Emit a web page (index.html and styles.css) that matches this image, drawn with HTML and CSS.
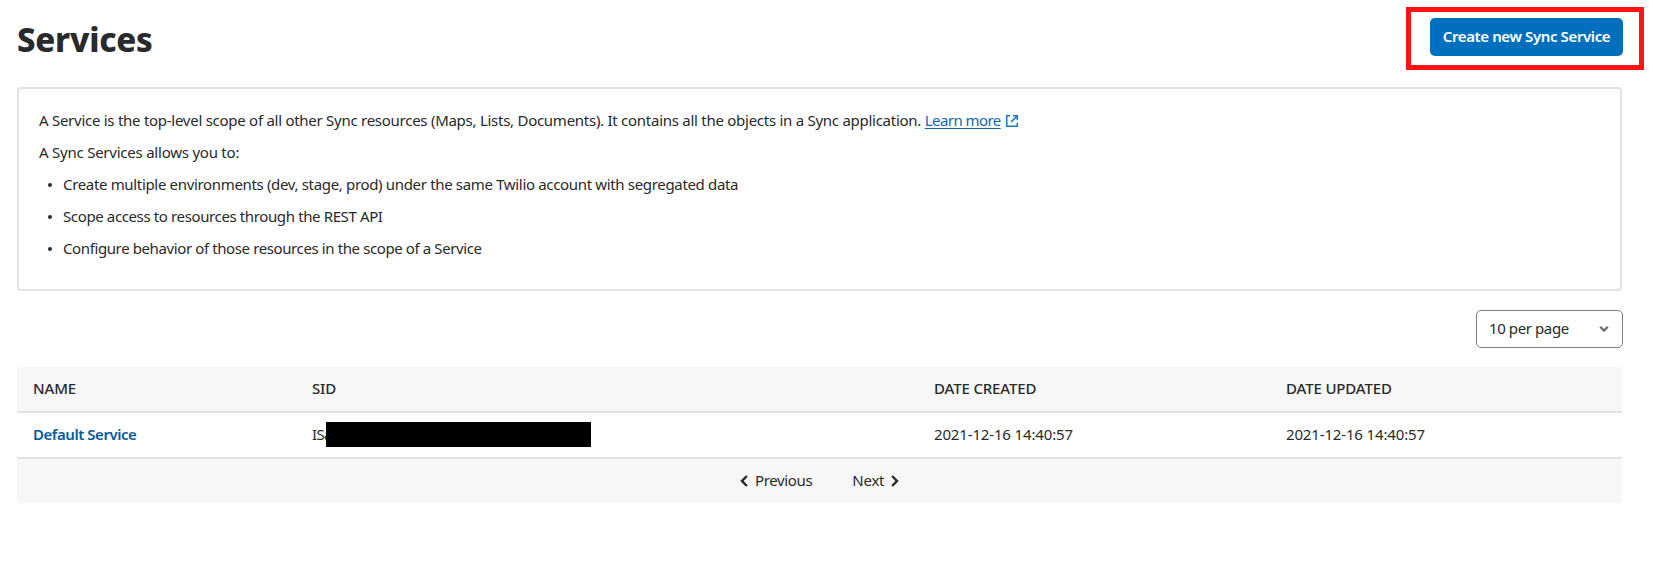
FILE: index.html
```
<!DOCTYPE html>
<html lang="en">
<head>
<meta charset="utf-8">
<title>Services</title>
<link rel="stylesheet" href="styles.css">
</head>
<body>
<main class="page">
  <header class="page-header">
    <h1 class="page-title">Services</h1>
    <div class="highlight">
      <button class="button-primary" type="button">Create new Sync Service</button>
    </div>
  </header>

  <section class="card">
    <p class="intro">A Service is the top-level scope of all other Sync resources (Maps, Lists, Documents). It contains all the objects in a Sync application.
      <a class="learn-more" href="#"><span class="learn-more-text">Learn more</span><svg class="icon-external" width="14" height="14" viewBox="0 0 14 14" fill="none" stroke="currentColor" stroke-width="1.6"><path d="M5 1.8H1.7v10.5h10.6V8.7M8 1.8h4.3V6M11.6 2.5L6.2 7.9"/></svg></a></p>
    <p class="allows">A Sync Services allows you to:</p>
    <ul class="features">
      <li class="feature feature-env">Create multiple environments (dev, stage, prod) under the same Twilio account with segregated data</li>
      <li class="feature feature-api">Scope access to resources through the REST API</li>
      <li class="feature feature-config">Configure behavior of those resources in the scope of a Service</li>
    </ul>
  </section>

  <div class="toolbar">
    <div class="select">
      <span>10 per page</span>
      <svg width="10" height="8" viewBox="0 0 10 8" fill="none" stroke="currentColor" stroke-width="2.2" stroke-linejoin="round"><path d="M1.2 1.8L5 5.6l3.8-3.8"/></svg>
    </div>
  </div>

  <table class="services">
    <colgroup><col class="col-name"><col class="col-sid"><col class="col-created"><col></colgroup>
    <thead>
      <tr><th>NAME</th><th>SID</th><th>DATE CREATED</th><th>DATE UPDATED</th></tr>
    </thead>
    <tbody>
      <tr>
        <td><a class="service-link" href="#">Default Service</a></td>
        <td><div class="sid">ISa<span class="redaction"></span></div></td>
        <td>2021-12-16 14:40:57</td>
        <td>2021-12-16 14:40:57</td>
      </tr>
    </tbody>
  </table>
  <nav class="pager">
    <span class="pager-item pager-previous"><svg width="8" height="12" viewBox="0 0 8 12" fill="none" stroke="currentColor" stroke-width="2.5"><path d="M6.9 1L2 6l4.9 5"/></svg>Previous</span>
    <span class="pager-item pager-next">Next<svg width="8" height="12" viewBox="0 0 8 12" fill="none" stroke="currentColor" stroke-width="2.5"><path d="M1.1 1L6 6l-4.9 5"/></svg></span>
  </nav>
</main>
</body>
</html>
```
FILE: styles.css
```
* { box-sizing: border-box; }

body {
  margin: 0;
  background: #fff;
  color: #282a2b;
  font: 400 15px/20px "Noto Sans", sans-serif;
}

p, h1, ul { margin: 0; padding: 0; }

.page { width: 1653px; padding: 7px 9px 0 17px; }

.page-header {
  display: flex;
  justify-content: space-between;
  align-items: flex-start;
}

.page-title {
  padding-top: 13px;
  font-size: 33px;
  line-height: 40px;
  font-weight: 800;
  letter-spacing: -0.25px;
}

.highlight {
  width: 238px;
  height: 63px;
  padding: 6px 16px 0 19px;
  border: 5px solid #fd1313;
}

.button-primary {
  display: block;
  width: 193px;
  height: 38px;
  padding: 0 0 2px;
  border: 0;
  border-radius: 5px;
  background: #0070be;
  color: #fff;
  font: 600 15px/20px "Noto Sans", sans-serif;
  letter-spacing: -0.38px;
  white-space: nowrap;
}

.card {
  width: 1605px;
  height: 204px;
  margin-top: 17px;
  padding: 21px 20px;
  border: 2px solid #dfe3e8;
  border-radius: 4px;
}

.intro { letter-spacing: -0.267px; }

.learn-more {
  color: #1467a9;
  letter-spacing: -0.56px;
  text-decoration: none;
}

.learn-more-text { text-decoration: underline; text-underline-offset: 2px; }

.icon-external { margin-left: 4px; vertical-align: -2px; color: #2579b8; }

.allows { margin-top: 12px; letter-spacing: -0.23px; }

.features { list-style: none; }

.feature {
  display: flex;
  align-items: center;
  gap: 11px;
  margin-top: 12px;
  padding-left: 9px;
}

.feature::before {
  content: "";
  width: 4px;
  height: 4px;
  margin-top: 2px;
  border-radius: 50%;
  background: #282a2b;
}

.feature-env { letter-spacing: -0.335px; }
.feature-api { letter-spacing: -0.375px; }
.feature-config { letter-spacing: -0.39px; }

.toolbar {
  display: flex;
  justify-content: flex-end;
  padding: 19px 21px 19px 0;
}

.select {
  display: flex;
  justify-content: space-between;
  align-items: center;
  width: 147px;
  height: 38px;
  padding: 0 13px 2px 12px;
  border: 1px solid #7d8082;
  border-radius: 5px;
  letter-spacing: -0.4px;
}

.select svg { margin-top: 2px; color: #6b6e72; }

.services {
  width: 1605px;
  table-layout: fixed;
  border-collapse: separate;
  border-spacing: 0;
}

.col-name { width: 279px; }
.col-sid { width: 622px; }
.col-created { width: 352px; }

.services th,
.services td {
  height: 46px;
  padding: 0 16px 2px;
  border-bottom: 2px solid #dfe3e8;
  text-align: left;
  vertical-align: middle;
  letter-spacing: -0.15px;
}

.services th { background: #f7f7f7; font-weight: 500; }

.service-link {
  color: #055a9e;
  font-weight: 600;
  letter-spacing: -0.45px;
  text-decoration: none;
}

.sid { position: relative; letter-spacing: -0.7px; }

.redaction {
  position: absolute;
  left: 14px;
  top: -2px;
  width: 265px;
  height: 25px;
  background: #000;
}

.pager {
  display: flex;
  gap: 40px;
  width: 1605px;
  height: 44px;
  padding: 0 0 2px 723px;
  background: #f7f7f7;
}

.pager-item { display: flex; align-items: center; gap: 7px; }
.pager-item svg { margin-top: 2px; }
.pager-previous { letter-spacing: -0.35px; }
.pager-next { letter-spacing: -0.25px; }
```
